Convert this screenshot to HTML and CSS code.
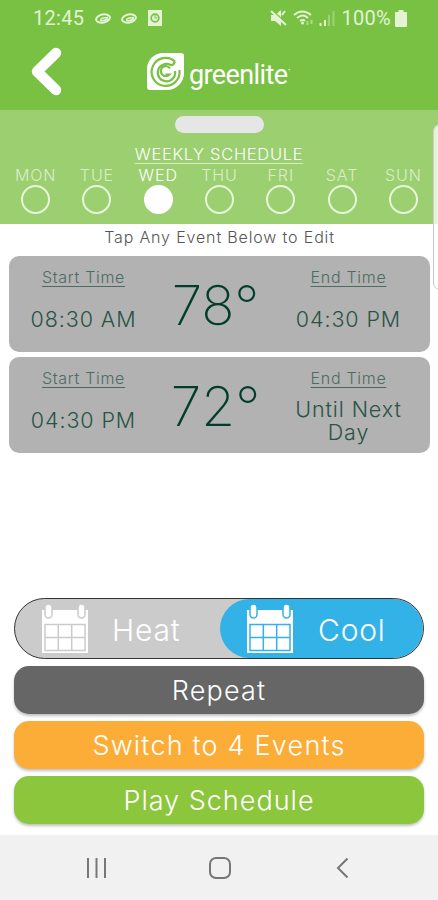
FILE: index.html
```html
<!DOCTYPE html>
<html lang="en">
<head>
    <meta charset="utf-8">
    <title>Weekly Schedule</title>
    <meta name="viewport" content="width=device-width, initial-scale=1">
    <link rel="stylesheet" href="styles.css">
</head>
<body>
    <div class="app">
        <header class="header">
            <div class="status-bar">
                <span class="clock">12:45</span>
                <svg class="notice" width="17" height="14" viewBox="0 0 17 14"><ellipse cx="8" cy="7.500" rx="7" ry="4" transform="rotate(-12 8 7.500)" fill="none" stroke="currentColor" stroke-width="2"/><path d="M13 6.500L8 7q-3 1-2 2.500 3 1 7-2" fill="none" stroke="currentColor" stroke-width="1.600"/></svg>
                <svg class="notice" width="17" height="14" viewBox="0 0 17 14"><ellipse cx="8" cy="7.500" rx="7" ry="4" transform="rotate(-12 8 7.500)" fill="none" stroke="currentColor" stroke-width="2"/><path d="M13 6.500L8 7q-3 1-2 2.500 3 1 7-2" fill="none" stroke="currentColor" stroke-width="1.600"/></svg>
                <svg class="photo" width="14" height="16" viewBox="0 0 14 16"><path d="M0 0h14v16H0z" fill="currentColor"/><circle cx="7" cy="8" r="3.800" fill="none" stroke="#78c143" stroke-width="1.700"/><path d="M7 5v3h2" fill="none" stroke="#78c143"/></svg>
                <span class="spacer"></span>
                <svg class="mute" width="17" height="17" viewBox="0 0 17 17"><path d="M1 5h4l6-5v16l-6-5H1z" fill="currentColor"/><path d="M2 0l15 14" stroke="#78c143" stroke-width="1.500"/><path d="M1 1l15 14M12 5l3-4" stroke="currentColor" stroke-width="2"/></svg>
                <svg class="wifi" width="22" height="16" viewBox="0 0 22 16"><path d="M1 5q8-7 17 0M4 8q6-5 11 0M7 11q3-2 5 0" fill="none" stroke="currentColor" stroke-width="2"/><circle cx="9.500" cy="13" r="1.500" fill="currentColor"/><path d="M14.500 11v4M18.500 10v4" stroke="currentColor" opacity=".5" stroke-width="2"/></svg>
                <svg class="signal" width="16" height="16" viewBox="0 0 16 16"><path d="M1.500 13v3M6 10v6" stroke="currentColor" stroke-width="2"/><path d="M10 5v11M14.500 1v15" stroke="currentColor" stroke-width="2" opacity=".35"/></svg>
                <span class="percent">100%</span>
                <svg width="12" height="17" viewBox="0 0 12 17"><path d="M3.500 0h5v2H11q1 0 1 1v13q0 1-1 1H1q-1 0-1-1V3q0-1 1-1h2.500z" fill="currentColor"/></svg>
            </div>
            <div class="title-bar">
                <svg class="back" width="32" height="50" viewBox="0 0 32 50"><path d="M25 6L6 24.500 25 43" fill="none" stroke="#fff" stroke-width="10.500" stroke-linecap="round" stroke-linejoin="round"/></svg>
                <div class="brand">
                    <svg width="38" height="38" viewBox="0 0 38 38">
                        <path d="M15 0h19q3 0 3 3v17a17 17 0 0 1-17 17H3q-3 0-3-3V16A16 16 0 0 1 15 0z" fill="#fff"/>
                        <g fill="none" stroke="#78c143" stroke-width="2.200">
                            <path d="M28 8.500A14 14 0 1 0 32.500 17"/>
                            <path d="M28 8.500q-2 4.500-4.500 3.500A8.700 8.700 0 1 0 28 18"/>
                            <path d="M23 15.500A5 5 0 1 0 22.500 21.500H18.500"/>
                        </g>
                    </svg>
                    <span class="brand-name">greenlite</span><span class="brand-mark">·</span>
                </div>
            </div>
        </header>

        <section class="week">
            <div class="handle"></div>
            <h1>WEEKLY SCHEDULE</h1>
            <div class="days">
                <div class="day"><span>MON</span><i></i></div>
                <div class="day"><span>TUE</span><i></i></div>
                <div class="day active"><span>WED</span><i></i></div>
                <div class="day"><span>THU</span><i></i></div>
                <div class="day"><span>FRI</span><i></i></div>
                <div class="day"><span>SAT</span><i></i></div>
                <div class="day"><span>SUN</span><i></i></div>
            </div>
            <div class="edge-panel"></div>
        </section>

        <main class="content">
            <p class="hint">Tap Any Event Below to Edit</p>
            <div class="event">
                <div class="time">
                    <h2>Start Time</h2>
                    <p>08:30 AM</p>
                </div>
                <div class="temp">78<span class="degree">°</span></div>
                <div class="time">
                    <h2 class="end">End Time</h2>
                    <p>04:30 PM</p>
                </div>
            </div>
            <div class="event">
                <div class="time">
                    <h2>Start Time</h2>
                    <p>04:30 PM</p>
                </div>
                <div class="temp">72<span class="degree">°</span></div>
                <div class="time">
                    <h2 class="end">End Time</h2>
                    <p class="two-line">Until Next Day</p>
                </div>
            </div>
        </main>

        <div class="actions">
            <div class="mode">
                <div class="mode-option heat">
                    <svg width="48" height="50" viewBox="0 0 48 50"><path d="M1 6h46v43H1z" fill="#fff"/><g fill="none" stroke="#cbcbcb" stroke-width="1.500"><path d="M4 20.500h40v26H4zM4 33.500h40M17.300 20.500v26M30.700 20.500v26"/><rect x="4" y="0" width="7" height="14" rx="3.500" fill="#fff"/><rect x="37" y="0" width="7" height="14" rx="3.500" fill="#fff"/></g></svg>
                    <span>Heat</span>
                </div>
                <div class="mode-option cool">
                    <svg width="48" height="50" viewBox="0 0 48 50"><path d="M1 6h46v43H1z" fill="#fff"/><g fill="none" stroke="#33b2e7" stroke-width="1.500"><path d="M4 20.500h40v26H4zM4 33.500h40M17.300 20.500v26M30.700 20.500v26"/><rect x="4" y="0" width="7" height="14" rx="3.500" fill="#fff"/><rect x="37" y="0" width="7" height="14" rx="3.500" fill="#fff"/></g></svg>
                    <span>Cool</span>
                </div>
            </div>
            <button class="repeat">Repeat</button>
            <button class="switch">Switch to 4 Events</button>
            <button class="play">Play Schedule</button>
        </div>

        <nav class="nav-bar">
            <svg width="24" height="24" viewBox="0 0 24 24"><path d="M3 2v20M11.500 2v20M20 2v20" stroke="#777" stroke-width="2"/></svg>
            <svg width="24" height="24" viewBox="0 0 24 24"><rect x="2" y="2" width="20" height="20" rx="6" fill="none" stroke="#777" stroke-width="2"/></svg>
            <svg width="24" height="24" viewBox="0 0 24 24"><path d="M16.500 2.500L7 12l9.500 9.500" fill="none" stroke="#777" stroke-width="2"/></svg>
        </nav>
    </div>
</body>
</html>
```
FILE: styles.css
```css
* {
    box-sizing: border-box;
}
body {
    margin: 0;
    background-color: #fff;
    font-family: Inter, "Liberation Sans", sans-serif;
    font-weight: 300;
}
h1, h2, p {
    margin: 0;
    font-weight: 300;
}
svg {
    display: block;
    flex: none;
}
.app {
    display: flex;
    flex-direction: column;
    width: 438px;
    height: 900px;
    overflow: hidden;
}
.header {
    height: 110px;
    background-color: #78c143;
}
.status-bar {
    display: flex;
    align-items: center;
    height: 36px;
    padding: 0 31px 0 33px;
    color: #e3f3d4;
    font: 400 20px/36px Roboto, sans-serif;
}
.clock {
    width: 62px;
    letter-spacing: 0.3px;
}
.notice {
    margin-right: 9px;
}
.photo {
    margin-left: 1px;
}
.spacer {
    flex: 1;
}
.wifi {
    margin: 0 4px 0 6px;
}
.percent {
    margin: 0 4px 0 6px;
    letter-spacing: 0.3px;
}
.title-bar {
    display: flex;
    align-items: flex-start;
    height: 74px;
    padding: 11px 0 0 31px;
}
.brand {
    display: flex;
    padding-top: 6px;
    margin-left: 84px;
    color: #fff;
}
.brand-name {
    margin: 5px 0 0 4px;
    font: 400 27px/34px Roboto, sans-serif;
    letter-spacing: -0.6px;
}
.brand-mark {
    font-size: 12px;
    line-height: 34px;
}
.week {
    position: relative;
    height: 114px;
    padding-top: 6px;
    background-color: #9bcf70;
    color: #fff;
    text-align: center;
}
.handle {
    width: 89px;
    height: 17px;
    margin: 0 auto;
    border-radius: 9px;
    background-color: #e6e6e6;
}
.week h1 {
    margin-top: 11px;
    font-size: 16.5px;
    line-height: 20px;
    letter-spacing: 0.7px;
    text-decoration: underline;
    text-decoration-color: rgba(255, 255, 255, 0.6);
    text-decoration-thickness: 1px;
    text-underline-offset: 3px;
}
.days {
    display: flex;
    padding: 2px 4px 0 5px;
}
.day {
    flex: 1;
    font-size: 16px;
    line-height: 18px;
    letter-spacing: 0.9px;
    color: rgba(255, 255, 255, 0.65);
}
.day i {
    display: block;
    width: 29px;
    height: 29px;
    margin: 1px auto 0;
    border: 2px solid #e7f5da;
    border-radius: 50%;
}
.day.active {
    color: #fff;
}
.day.active i {
    border-color: #fff;
    background-color: #fff;
}
.edge-panel {
    position: absolute;
    top: 14px;
    left: 433px;
    width: 14px;
    height: 166px;
    border: 1px solid #ccc;
    border-radius: 7px;
    background-color: rgba(255, 255, 255, 0.75);
}
.content {
    flex: 1;
    padding: 0 8px 0 9px;
}
.hint {
    height: 32px;
    color: #555;
    font-size: 16px;
    line-height: 26px;
    letter-spacing: 0.85px;
    text-align: center;
}
.event {
    display: grid;
    grid-template-columns: 149px 1fr 163px;
    height: 96px;
    margin-bottom: 5px;
    border-radius: 10px;
    background-color: #b2b2b2;
    color: #285345;
    text-align: center;
}
.time h2 {
    margin-top: 11px;
    color: #4d6b61;
    font-size: 16px;
    line-height: 20px;
    letter-spacing: 0.7px;
    text-decoration: underline;
    text-decoration-thickness: 1px;
    text-underline-offset: 3px;
}
.time p {
    height: 62px;
    font-size: 21.5px;
    line-height: 65px;
    letter-spacing: 0.9px;
}
.time p.two-line {
    padding: 10px 20px 0;
    line-height: 23px;
}
.temp {
    padding-left: 6px;
    color: #003d2c;
    font-size: 55px;
    font-weight: 200;
    line-height: 98px;
    white-space: nowrap;
}
.actions {
    display: flex;
    flex-direction: column;
    gap: 7px;
    height: 237px;
    padding: 0 14px;
}
.mode {
    display: flex;
    height: 61px;
    border: 1px solid #333;
    border-radius: 31px;
    background-color: #cbcbcb;
    overflow: hidden;
}
.mode-option {
    display: flex;
    align-items: center;
    color: #fff;
    font-size: 30px;
    letter-spacing: 0.8px;
}
.mode-option span {
    padding-top: 3px;
}
.heat {
    width: 205px;
    padding-left: 26px;
}
.heat span {
    margin-left: 23px;
}
.cool {
    flex: 1;
    padding-left: 26px;
    border-radius: 31px;
    background-color: #33b2e7;
}
.cool span {
    margin-left: 24px;
}
button {
    height: 48px;
    padding: 2px 0 0;
    border: none;
    border-radius: 15px;
    box-shadow: 0 2px 3px rgba(0, 0, 0, 0.25);
    color: #fff;
    font: 300 27px/46px Inter, sans-serif;
    letter-spacing: 1.2px;
}
.repeat {
    background-color: #666;
}
.switch {
    background-color: #fbad38;
}
.play {
    letter-spacing: 1px;
    background-color: #8cc63d;
}
.nav-bar {
    display: flex;
    align-items: center;
    justify-content: space-between;
    height: 65px;
    padding: 0 83px 0 85px;
    background-color: #f1f1f1;
}
```
